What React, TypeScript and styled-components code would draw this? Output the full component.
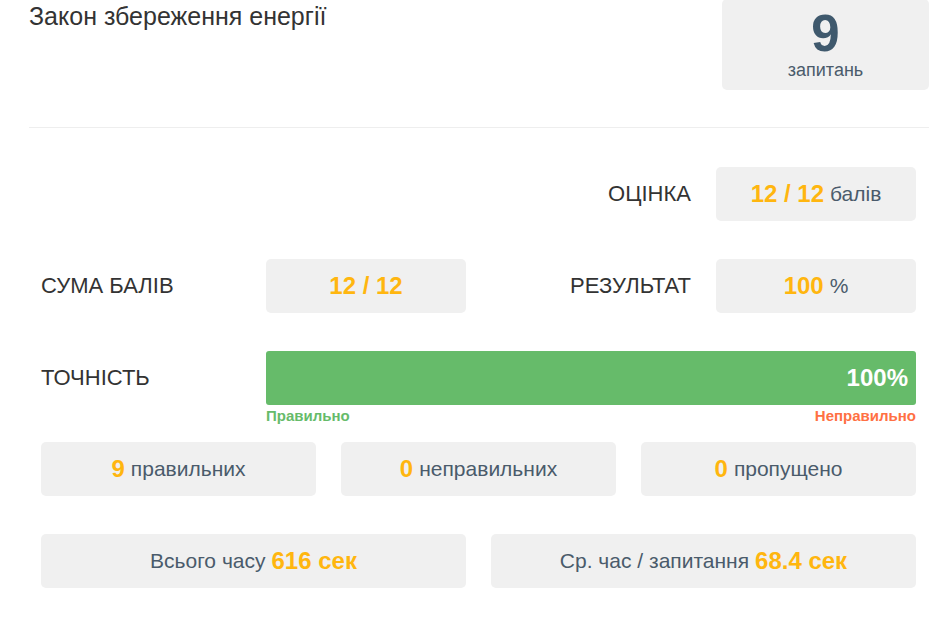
import React from 'react'
import styled, { createGlobalStyle } from 'styled-components'

const Global = createGlobalStyle`
body{
  margin:0;
  background:#fff;
  font-family:"Liberation Sans", Arial, sans-serif;
}
`

const App = () => {
  const accuracy = 100
  return (
    <Page>
      <Global />
      <Top>
        <Title>Закон збереження енергії</Title>
        <CountBox>
          <Big>9</Big>
          <Small>запитань</Small>
        </CountBox>
      </Top>
      <Divider />
      <Grid>
        <Label $right $col={3}>ОЦІНКА</Label>
        <Box $col={4}><Num>12 / 12</Num><Unit>балів</Unit></Box>

        <Label $col={1}>СУМА БАЛІВ</Label>
        <Box $col={2}><Num>12 / 12</Num></Box>
        <Label $right $col={3}>РЕЗУЛЬТАТ</Label>
        <Box $col={4}><Num>100</Num><Unit>%</Unit></Box>

        <Label $col={1}>ТОЧНІСТЬ</Label>
        <BarWrap>
          <Bar>
            <Fill style={{ width: accuracy + '%' }}>{accuracy}%</Fill>
          </Bar>
          <BarLegend>
            <Good>Правильно</Good>
            <Bad>Неправильно</Bad>
          </BarLegend>
        </BarWrap>
      </Grid>
      <Three>
        <Stat><Num>9</Num><Unit>правильних</Unit></Stat>
        <Stat><Num>0</Num><Unit>неправильних</Unit></Stat>
        <Stat><Num>0</Num><Unit>пропущено</Unit></Stat>
      </Three>
      <Two>
        <Stat><Unit $first>Всього часу</Unit><Num>616 сек</Num></Stat>
        <Stat><Unit $first>Ср. час / запитання</Unit><Num>68.4 сек</Num></Stat>
      </Two>
    </Page>
  )
}
export default App

const Page = styled.div`
width:900px;
margin-left:29px;
`
const Top = styled.div`
display:flex;
justify-content:space-between;
align-items:flex-start;
`
const Title = styled.h1`
margin:0;
padding-top:2px;
font-size:25px;
font-weight:normal;
color:#333;
`
const CountBox = styled.div`
width:207px;
height:91px;
margin-top:-1px;
background:#f0f0f0;
border-radius:5px;
display:flex;
flex-direction:column;
align-items:center;
padding-top:9px;
box-sizing:border-box;
`
const Big = styled.div`
font-size:51px;
font-weight:bold;
color:#3f596d;
line-height:52px;
`
const Small = styled.div`
font-size:18px;
color:#4a5b6b;
`
const Divider = styled.div`
height:1px;
background:#eee;
margin-top:37px;
`
const Grid = styled.div`
display:grid;
grid-template-columns:225px 200px 250px 200px;
grid-auto-rows:54px;
row-gap:38px;
padding:39px 13px 0 12px;
`
const Label = styled.div<{ $right?: boolean; $col: number }>`
grid-column:${p => p.$col};
display:flex;
align-items:center;
justify-content:${p => (p.$right ? 'flex-end' : 'flex-start')};
padding-right:${p => (p.$right ? '25px' : '0')};
font-size:22px;
color:#333;
`
const Box = styled.div<{ $col: number }>`
grid-column:${p => p.$col};
background:#f0f0f0;
border-radius:5px;
display:flex;
align-items:center;
justify-content:center;
`
const Num = styled.span`
font-size:24px;
font-weight:bold;
color:#ffb60f;
`
const Unit = styled.span<{ $first?: boolean }>`
font-size:21px;
color:#4a5b6b;
margin:${p => (p.$first ? '0 6px 0 0' : '0 0 0 6px')};
`
const BarWrap = styled.div`
grid-column:2 / 5;
`
const Bar = styled.div`
height:54px;
background:#f0f0f0;
border-radius:3px;
overflow:hidden;
`
const Fill = styled.div`
height:100%;
background:#66bb6a;
color:#fff;
font-size:24px;
font-weight:bold;
display:flex;
align-items:center;
justify-content:flex-end;
padding-right:8px;
box-sizing:border-box;
`
const BarLegend = styled.div`
display:flex;
justify-content:space-between;
font-size:15px;
font-weight:bold;
margin-top:2px;
`
const Good = styled.span`
color:#66bb6a;
`
const Bad = styled.span`
color:#ff7043;
`
const Three = styled.div`
display:grid;
grid-template-columns:repeat(3, 1fr);
column-gap:25px;
padding:0 13px 0 12px;
margin-top:37px;
`
const Two = styled.div`
display:grid;
grid-template-columns:repeat(2, 1fr);
column-gap:25px;
padding:0 13px 0 12px;
margin-top:38px;
`
const Stat = styled.div`
height:54px;
background:#f0f0f0;
border-radius:5px;
display:flex;
align-items:center;
justify-content:center;
`
